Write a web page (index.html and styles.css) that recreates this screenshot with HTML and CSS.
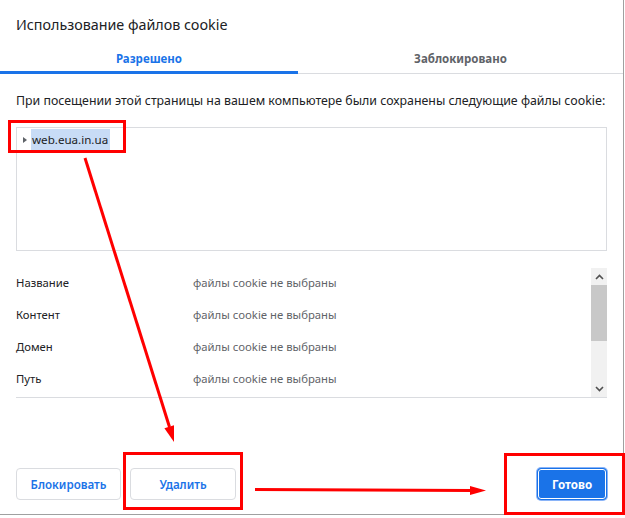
FILE: index.html
```html
<!DOCTYPE html>
<html lang="ru">
<head>
<meta charset="utf-8">
<title>Использование файлов cookie</title>
<link rel="stylesheet" href="styles.css">
</head>
<body>
<div class="page">
  <div class="dialog">
    <h1 class="title">Использование файлов cookie</h1>
    <div class="tabs">
      <div class="tab tab-active">Разрешено</div>
      <div class="tab">Заблокировано</div>
    </div>
    <div class="content">
      <p class="desc">При посещении этой страницы на вашем компьютере были сохранены следующие файлы cookie:</p>
      <div class="tree">
        <div class="tree-row">
          <span class="twisty"></span>
          <span class="tree-label">web.eua.in.ua</span>
        </div>
      </div>
      <div class="details">
        <div class="detail-rows">
          <div class="row"><span class="label">Название</span><span class="value">файлы cookie не выбраны</span></div>
          <div class="row"><span class="label">Контент</span><span class="value">файлы cookie не выбраны</span></div>
          <div class="row"><span class="label">Домен</span><span class="value">файлы cookie не выбраны</span></div>
          <div class="row"><span class="label">Путь</span><span class="value">файлы cookie не выбраны</span></div>
        </div>
        <div class="scrollbar">
          <div class="sb-btn sb-up"><svg width="9" height="6" viewBox="0 0 9 6"><path d="M1 5 L4.5 1.5 L8 5" fill="none" stroke="#505050" stroke-width="1.6"/></svg></div>
          <div class="sb-track"><div class="sb-thumb"></div></div>
          <div class="sb-btn sb-down"><svg width="9" height="6" viewBox="0 0 9 6"><path d="M1 1 L4.5 4.5 L8 1" fill="none" stroke="#505050" stroke-width="1.6"/></svg></div>
        </div>
      </div>
    </div>
    <div class="actions">
      <button class="btn btn-block">Блокировать</button>
      <button class="btn btn-delete">Удалить</button>
      <span class="spacer"></span>
      <button class="btn btn-primary">Готово</button>
    </div>
  </div>
  <svg class="annot" width="625" height="518" viewBox="0 0 625 518">
    <g fill="none" stroke="#ff0000" stroke-width="3">
      <rect x="9.5" y="121.5" width="115" height="30"/>
      <rect x="124.5" y="453.5" width="117" height="55"/>
      <rect x="505.5" y="454.5" width="118" height="59"/>
      <line x1="85" y1="158" x2="169.5" y2="427"/>
      <line x1="255" y1="489.5" x2="471" y2="490.5"/>
    </g>
    <g fill="#ff0000">
      <polygon points="174,442 164.4,428.2 174,425.2"/>
      <polygon points="486,490.5 470,486 470,495"/>
    </g>
  </svg>
</div>
</body>
</html>
```

FILE: styles.css
```css
* { box-sizing: border-box; }
html, body { margin: 0; padding: 0; background: #ffffff; }
body { font-family: "Noto Sans", "Open Sans", sans-serif; color: #202124; }

.page { position: relative; width: 625px; height: 518px; overflow: hidden; }

.dialog {
  width: 624px;
  height: 515px;
  background: #fff;
  border-right: 1px solid #a0a0a0;
  border-bottom: 1px solid #a0a0a0;
  display: flex;
  flex-direction: column;
}

.title {
  margin: 0;
  padding: 15px 16px 0;
  font-size: 14.3px;
  font-weight: 400;
  line-height: 20px;
  height: 45px;
  color: #202124;
}

.tabs {
  display: flex;
  height: 29px;
  border-bottom: 1px solid #dadce0;
}
.tab {
  flex: 1;
  text-align: center;
  font-size: 11.5px;
  font-weight: 700;
  color: #5f6368;
  line-height: 27px;
  position: relative;
}
.tab-active { color: #1a73e8; flex: 0 0 298px; }
.tab-active::after {
  content: "";
  position: absolute;
  left: 0; right: 0; bottom: -1px;
  height: 3px;
  background: #1a73e8;
}

.content { padding: 0 16px; display: flex; flex-direction: column; }

.desc {
  margin: 0;
  padding-top: 19px;
  font-size: 12.35px;
  line-height: 16px;
  height: 53px;
  white-space: nowrap;
}

.tree {
  height: 124px;
  border: 1px solid #dadce0;
  padding: 1px 0 0 6px;
}
.tree-row { display: flex; align-items: center; height: 21px; }
.twisty {
  width: 0; height: 0;
  border-left: 4px solid #5f6368;
  border-top: 3.5px solid transparent;
  border-bottom: 3.5px solid transparent;
  margin-right: 4px;
}
.tree-label {
  background: #c8dcf6;
  font-size: 11.6px;
  line-height: 21px;
  padding: 0 2px 0 1px;
}

.details {
  margin-top: 17px;
  height: 130px;
  display: flex;
  border-bottom: 1px solid #dadce0;
}
.detail-rows { flex: 1; margin-top: -2px; }
.row { display: flex; height: 32px; align-items: center; font-size: 11.3px; }
.label { width: 177px; color: #202124; }
.value { color: #5f6368; }

.scrollbar {
  width: 16px;
  background: #f1f1f1;
  display: flex;
  flex-direction: column;
}
.sb-btn { height: 17px; display: flex; align-items: center; justify-content: center; }
.sb-track { flex: 1; }
.sb-thumb { height: 56px; background: #c8c8c8; }

.actions {
  margin-top: auto;
  padding: 0 16px 14px;
  display: flex;
  gap: 9px;
}
.spacer { flex: 1; }
.btn {
  font-family: inherit;
  height: 32px;
  padding: 0;
  border: 1px solid #dadce0;
  border-radius: 4px;
  background: #fff;
  color: #1a73e8;
  font-size: 11.6px;
  font-weight: 600;
}
.btn-block { width: 105px; }
.btn-delete { width: 106px; }
.btn-primary {
  width: 70px;
  background: #1a73e8;
  border-color: #1a73e8;
  color: #fff;
  font-weight: 700;
  box-shadow: inset 0 0 0 1px #fff, 0 0 0 1px #8ab4f8;
}

.annot { position: absolute; left: 0; top: 0; pointer-events: none; }
```
